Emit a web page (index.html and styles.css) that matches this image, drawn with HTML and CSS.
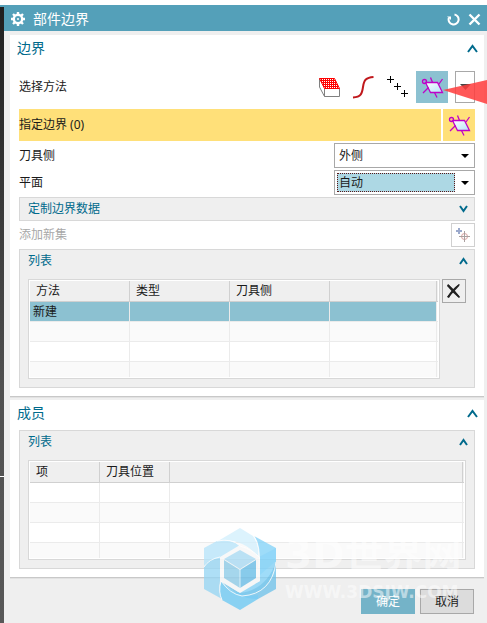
FILE: index.html
```html
<!DOCTYPE html>
<html lang="zh-CN">
<head>
<meta charset="utf-8">
<title>部件边界</title>
<link rel="stylesheet" href="styles.css">
</head>
<body>
<svg class="defs" aria-hidden="true">
  <defs>
    <pattern id="check" width="2" height="2" patternUnits="userSpaceOnUse">
      <rect width="2" height="2" fill="#f00"/>
      <path d="M0 0h1v1h-1z" fill="#fff"/>
    </pattern>
    <linearGradient id="glass" x1="0" y1="0" x2="1" y2="1">
      <stop offset="0" stop-color="#fff"/>
      <stop offset="1" stop-color="#b4e4f8"/>
    </linearGradient>
    <symbol id="plane" viewBox="0 0 32 32">
      <g stroke="#c000c8" stroke-width="1.3" fill="none">
        <path d="M9.500 11.500h12l5 10h-12z" fill="url(#glass)"/>
        <circle cx="8.500" cy="10.500" r="2"/>
        <path d="M14.500 6.500l2 5M26.500 8l-3.500 5M7 22l5.500-5.500M18.500 21.500l2.500 5"/>
      </g>
    </symbol>
  </defs>
</svg>
<div class="screen">
  <div class="backdrop"></div>
  <main class="dialog">
    <header class="titlebar">
      <svg width="14" height="14" viewBox="0 0 14 14" aria-hidden="true">
        <circle cx="7" cy="7" r="4.200" fill="none" stroke="#fff" stroke-width="2.400"/>
        <path d="M7 0v2.500M7 11.500v2.500M0 7h2.500M11.500 7h2.500M2 2l2 2M10 10l2 2M2 12l2-2M10 4l2-2" stroke="#fff" stroke-width="2.400"/>
        <circle cx="7" cy="7" r="1" fill="#fff"/>
      </svg>
      <h1>部件边界</h1>
      <button class="title-button" aria-label="重置">
        <svg width="13" height="13" viewBox="0 0 13 13"><path d="M1.800 5A5 5 0 1 0 7.500 1.500" fill="none" stroke="#fff" stroke-width="2"/><path d="M0 3.500h4v3.500z" fill="#fff"/></svg>
      </button>
      <button class="title-button" aria-label="关闭">
        <svg width="13" height="13" viewBox="0 0 13 13"><path d="M1.500 1.500l10 10M11.500 1.500l-10 10" stroke="#fff" stroke-width="2.400"/></svg>
      </button>
    </header>

    <section class="panel">
      <div class="panel-head">
        <h2>边界</h2>
        <button class="fold" aria-label="折叠边界"><svg width="11" height="9" viewBox="0 0 11 9"><path d="M1 8l4.500-6 4.500 6" /></svg></button>
      </div>
      <div class="rows">
        <div class="row methods">
          <span class="label">选择方法</span>
          <div class="tools">
            <button class="tool" aria-label="面">
              <svg width="32" height="32" viewBox="0 0 32 32"><path d="M5.500 7.500v8.500l5 9.500h15v-8" fill="#fff" stroke="#808080"/><path d="M10.500 17.500v8" stroke="#808080"/><path d="M5.500 7.500h15l5 10h-15z" fill="url(#check)" stroke="#f00"/></svg>
            </button>
            <button class="tool" aria-label="曲线">
              <svg width="32" height="32" viewBox="0 0 32 32"><path d="M5 26.500C13 26 14 23 15 16S18 6.500 25.500 6" fill="none" stroke="#c0181c" stroke-width="2"/></svg>
            </button>
            <button class="tool" aria-label="点">
              <svg width="32" height="32" viewBox="0 0 32 32"><path d="M5 8.500h7M8.500 5v7M12 15.500h7M15.500 12v7M19 22.500h7M22.500 19v7" stroke="#000"/></svg>
            </button>
            <button class="tool active" aria-label="永久边界"><svg width="32" height="32"><use href="#plane"/></svg></button>
          </div>
          <button class="more" aria-label="更多方法"><svg width="11" height="6" viewBox="0 0 11 6"><path d="M0 0h11l-5.500 6z" fill="#444"/></svg></button>
        </div>
        <div class="row specify">
          <span class="label">指定边界 (0)</span>
          <button class="tool" aria-label="指定边界"><svg width="32" height="32"><use href="#plane"/></svg></button>
        </div>
        <div class="row">
          <label class="label" for="side">刀具侧</label>
          <div class="combo"><select id="side"><option>外侧</option><option>内侧</option></select></div>
        </div>
        <div class="row">
          <label class="label" for="level">平面</label>
          <div class="combo focused"><select id="level"><option>自动</option><option>指定</option></select></div>
        </div>
        <div class="subbar">
          <h3>定制边界数据</h3>
          <button class="fold" aria-label="展开定制边界数据"><svg width="9" height="8" viewBox="0 0 9 8"><path d="M1 1l3.500 5 3.500-5"/></svg></button>
        </div>
        <div class="row">
          <span class="label muted">添加新集</span>
          <button class="square pale" disabled aria-label="添加新集">
            <svg width="22" height="22" viewBox="0 0 22 22"><path d="M4 7h6M7 4v6" stroke="#9ba9cc" stroke-width="2"/><circle cx="12.500" cy="12.500" r="3" fill="none" stroke="#d8a0a0"/><path d="M7 12.500h11M12.500 7v11" stroke="#aaa0a0"/></svg>
          </button>
        </div>
        <div class="group">
          <div class="group-head">
            <h3>列表</h3>
            <button class="fold" aria-label="折叠列表"><svg width="9" height="8" viewBox="0 0 9 8"><path d="M1 7l3.500-5 3.500 5"/></svg></button>
          </div>
          <div class="group-body">
            <div class="grid-box">
              <table>
                <colgroup><col class="wide"><col class="wide"><col class="wide"><col><col class="edge"></colgroup>
                <thead><tr><th>方法</th><th>类型</th><th>刀具侧</th><th></th><th></th></tr></thead>
                <tbody>
                  <tr class="selected"><td>新建</td><td></td><td></td><td></td><td></td></tr>
                  <tr class="alt"><td></td><td></td><td></td><td></td><td></td></tr>
                  <tr><td></td><td></td><td></td><td></td><td></td></tr>
                  <tr class="alt last"><td></td><td></td><td></td><td></td><td></td></tr>
                </tbody>
              </table>
            </div>
            <button class="square" aria-label="移除">
              <svg width="22" height="22" viewBox="0 0 22 22"><path d="M5 4Q11 9 17 17l-1 1Q10 13 4 6z" fill="#222"/><path d="M17 4Q10 10 6 18l-2-1Q9 9 16 4z" fill="#222"/><path d="M5 5l11 12M16 5L5 17" stroke="#222" stroke-width="1.600"/></svg>
            </button>
          </div>
        </div>
      </div>
    </section>

    <section class="panel">
      <div class="panel-head">
        <h2>成员</h2>
        <button class="fold" aria-label="折叠成员"><svg width="11" height="9" viewBox="0 0 11 9"><path d="M1 8l4.500-6 4.500 6"/></svg></button>
      </div>
      <div class="rows members">
        <div class="group">
          <div class="group-head">
            <h3>列表</h3>
            <button class="fold" aria-label="折叠成员列表"><svg width="9" height="8" viewBox="0 0 9 8"><path d="M1 7l3.500-5 3.500 5"/></svg></button>
          </div>
          <div class="group-body">
            <div class="grid-box">
              <table>
                <colgroup><col class="narrow"><col class="narrow"><col><col class="edge"></colgroup>
                <thead><tr><th>项</th><th>刀具位置</th><th></th><th></th></tr></thead>
                <tbody>
                  <tr><td></td><td></td><td></td><td></td></tr>
                  <tr class="alt"><td></td><td></td><td></td><td></td></tr>
                  <tr><td></td><td></td><td></td><td></td></tr>
                  <tr class="alt last"><td></td><td></td><td></td><td></td></tr>
                </tbody>
              </table>
            </div>
          </div>
        </div>
      </div>
    </section>

    <footer class="actions">
      <button class="action primary">确定</button>
      <button class="action">取消</button>
    </footer>
  </main>

  <svg class="pointer" width="44" height="26" viewBox="0 0 44 26" aria-hidden="true"><path d="M0 11L44 1v24z" fill="#ff3c3c" fill-opacity=".86"/></svg>

  <div class="watermark">
    <svg width="72" height="82" viewBox="0 0 72 82" aria-hidden="true">
      <g fill-opacity=".88">
        <path d="M36 0L14 13Q40 10 54 29Q56 19 49 8z" fill="#d2effd"/>
        <path d="M50 8Q57 18 55 40V48L72 33V20z" fill="#80d2f8"/>
        <path d="M55 29L72 20V34Q66 66 38 68L30 66L56 53z" fill="#80d2f8"/>
        <path d="M72 34V61L54 71Q36 72 17 53L36 65Q62 62 72 34z" fill="#6bc2ea"/>
        <path d="M54 71L36 82 18 72Q14 64 17 53Q32 70 54 67z" fill="#68c7f4"/>
        <path d="M0 39Q2 31 16 29V53Q14 64 18 71L0 61z" fill="#94d5f4"/>
        <path d="M0 38V20L13 13Q28 11 36 18L16 30Q5 31 0 38z" fill="#b4e4fb"/>
      </g>
      <path d="M36 17L56 29V53L36 65 16 53V29z" fill="#f8f8f8"/>
      <path d="M36 22L52 31 36 41 20 31z" fill="#b0ddf4"/>
      <path d="M20 32L36 42V60L20 50z" fill="#96cfe9"/>
      <path d="M52 32L36 42V60L52 50z" fill="#74c2e8"/>
      <path d="M36 41V60" stroke="#d8f0fb"/>
      <path d="M13 13Q28 10 36 18Q48 21 55 29M50 8Q57 18 55 40M72 34Q68 66 38 68Q26 66 17 53Q14 64 18 72M16 29Q5 31 0 39" fill="none" stroke="#fff" stroke-opacity=".85"/>
    </svg>
    <div class="brand"><strong>3D世界网</strong><span>WWW.3DSJW.COM</span></div>
  </div>
</div>
</body>
</html>
```
FILE: styles.css
```css
* { box-sizing: border-box; }

body {
  margin: 0;
  background: #fff;
  color: #1a1a1a;
  font: 12px/18px "Noto Sans", "Noto Sans CJK SC", sans-serif;
}

h1, h2, h3 { margin: 0; font-weight: 400; }

button {
  padding: 0;
  border: 0;
  background: none;
  color: inherit;
  font: inherit;
}

svg { display: block; }

.defs { position: absolute; width: 0; height: 0; }

.screen {
  position: relative;
  display: flex;
  min-height: 100vh;
  padding-top: 5px;
}

.backdrop {
  flex: 0 0 4px;
  border-top: 2px solid #54a0b9;
  background:
    linear-gradient(#fff, #fff) 0 469px / 4px 1px no-repeat,
    linear-gradient(#202020, #505050 380px, #585858);
}

.dialog {
  flex: 1;
  min-width: 0;
  background: #efefef;
}

.titlebar {
  display: flex;
  align-items: center;
  gap: 8px;
  height: 26px;
  padding: 2px 6px 0 7px;
  background: #54a0b9;
  color: #fff;
}

.titlebar h1 { flex: 1; font-size: 14px; line-height: 20px; }

.panel {
  margin: 4px 3px 3px 6px;
  border-bottom: 1px solid #c8c8c8;
  background: #fff;
  box-shadow: 0 1px 0 #e2e2e2;
}

.panel + .panel { margin-top: 3px; }

.panel-head {
  display: flex;
  align-items: center;
  justify-content: space-between;
  height: 26px;
  padding: 0 6px 0 7px;
  color: #006a8c;
}

.panel-head h2 { font-size: 14px; line-height: 20px; }

.fold path {
  fill: none;
  stroke: #006a8c;
  stroke-width: 2;
}

.rows {
  display: flex;
  flex-direction: column;
  gap: 2px;
  padding: 10px 9px 8px;
}

.members { padding-top: 4px; }

.row {
  display: flex;
  align-items: center;
}

.label { flex: 1; }

.muted { color: #a8a8a8; }

.methods { gap: 7px; margin-bottom: 4px; }

.tools { display: flex; gap: 2px; }

.tool { width: 32px; height: 32px; }

.active { background: #8cc1d1; }

.more {
  display: grid;
  place-items: center;
  width: 20px;
  height: 32px;
  border: 1px solid #a8a8a8;
}

.specify { gap: 2px; }

.specify .label {
  line-height: 32px;
  background: #ffe079;
}

.specify .tool { background: #ffe079; }

.combo {
  position: relative;
  display: flex;
  width: 141px;
  height: 25px;
  padding: 2px 19px 2px 2px;
  border: 1px solid #a8a8a8;
  background: #fff;
}

.combo::after {
  content: "";
  position: absolute;
  top: 10px;
  right: 5px;
  border: 4px solid transparent;
  border-top-color: #000;
  border-bottom: 0;
  pointer-events: none;
}

.combo select {
  flex: 1;
  padding: 0 1px;
  border: 1px solid transparent;
  border-radius: 0;
  outline: 0;
  appearance: none;
  background: none;
  color: inherit;
  font: inherit;
}

.focused select {
  border: 1px dotted #5a1818;
  background: #add8e4;
}

.subbar,
.group-head {
  display: flex;
  align-items: center;
  justify-content: space-between;
  padding: 0 6px 0 8px;
  color: #006a8c;
}

.subbar {
  height: 24px;
  border: 1px solid #d8d8d8;
  background: #efefef;
}

h3 { font-size: 12px; }

.square {
  display: grid;
  place-items: center;
  width: 24px;
  height: 24px;
  border: 1px solid #a8a8a8;
}

.pale { border-color: #d0d0d0; }

.group {
  border: 1px solid #d8d8d8;
  background: #efefef;
}

.group-head { height: 29px; padding-bottom: 8px; }

.group-body {
  display: flex;
  align-items: flex-start;
  gap: 2px;
  padding: 0 8px 8px;
}

.grid-box {
  flex: 1;
  min-width: 0;
  padding: 1px;
  border: 1px solid #d8d8d8;
  background: #fff;
}

table {
  width: 100%;
  table-layout: fixed;
  border-spacing: 0;
}

.wide { width: 100px; }
.narrow { width: 70px; }
.edge { width: 1px; }

th, td {
  height: 20px;
  padding: 0;
  border-right: 1px solid #ebebeb;
  border-bottom: 1px solid #ebebeb;
  font-weight: 400;
  line-height: 18px;
  text-align: left;
}

th {
  height: 21px;
  padding-left: 6px;
  border-color: #d0d0d0;
  background: #efefef;
}

td { padding-left: 3px; }

th:last-child,
td:last-child { padding: 0; border-right: 0; }

.alt td { background: #fafafa; }

.selected td { background: #8cc1d1; }

.selected td:last-child { background: #fff; }

.last td { height: 15px; border-bottom: 0; }

.actions {
  display: flex;
  justify-content: flex-end;
  gap: 5px;
  padding: 8px 13px 9px;
}

.action {
  width: 54px;
  height: 25px;
  border: 1px solid #a8a8a8;
  background: #dcdcdc;
}

.primary {
  border-color: #74b3c8;
  background: #74b3c8;
  color: #fff;
}

.pointer {
  position: absolute;
  top: 79px;
  right: 0;
}

.watermark {
  position: absolute;
  top: 528px;
  right: 25px;
  display: flex;
  gap: 9px;
  width: 258px;
  opacity: .85;
  pointer-events: none;
}

.watermark svg { flex: none; }

.brand {
  display: flex;
  flex-direction: column;
  color: #fff;
  opacity: .6;
  white-space: nowrap;
}

.brand strong {
  font: 700 39px/54px "DejaVu Sans", "Noto Sans CJK SC", sans-serif;
}

.brand span {
  font: 700 17px/20px "DejaVu Sans", sans-serif;
}
```
